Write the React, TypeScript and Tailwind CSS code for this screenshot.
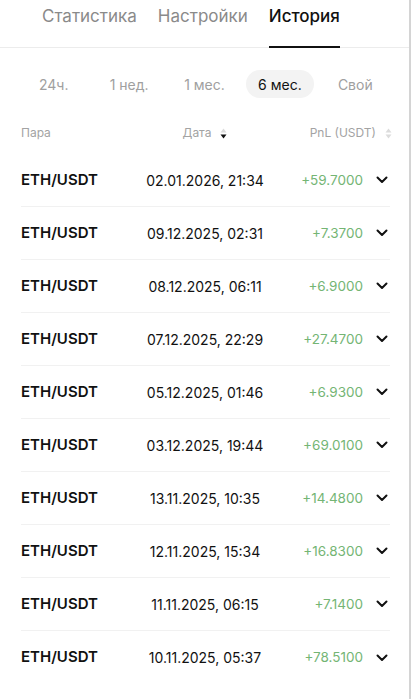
import React from "react";

const rows = [
  ["02.01.2026, 21:34", "+59.7000"],
  ["09.12.2025, 02:31", "+7.3700"],
  ["08.12.2025, 06:11", "+6.9000"],
  ["07.12.2025, 22:29", "+27.4700"],
  ["05.12.2025, 01:46", "+6.9300"],
  ["03.12.2025, 19:44", "+69.0100"],
  ["13.11.2025, 10:35", "+14.4800"],
  ["12.11.2025, 15:34", "+16.8300"],
  ["11.11.2025, 06:15", "+7.1400"],
  ["10.11.2025, 05:37", "+78.5100"],
];

function SortIcon({ active }: { active?: boolean }) {
  return (
    <svg width="7" height="11" viewBox="0 0 7 11" className="ml-[9px]">
      <path d="M3.5 0.5 L6.5 4.5 L0.5 4.5 Z" fill="#dcdcdc" />
      <path d="M3.5 10.5 L6.5 6.5 L0.5 6.5 Z" fill={active ? "#111111" : "#dcdcdc"} />
    </svg>
  );
}

function Chevron() {
  return (
    <svg width="12" height="8" viewBox="0 0 12 8">
      <path d="M1.5 1.5 L6 6 L10.5 1.5" fill="none" stroke="#111" strokeWidth="2" strokeLinecap="round" strokeLinejoin="round" />
    </svg>
  );
}

export default function App() {
  const font = { fontFamily: "Inter, 'Noto Sans', sans-serif" };
  return (
    <div className="w-[411px] min-h-[699px] bg-white border-r-2 border-[#d4d4d4] overflow-hidden" style={font}>
      <div className="h-[48px] border-b border-[#ececec] flex items-end pl-[42px] gap-[21px]">
        <div className="flex flex-col h-full">
          <div className="flex-1 flex items-start pt-[4px] text-[17px] text-[#8a8a8a]">Статистика</div>
          <div className="h-[2px]" />
        </div>
        <div className="flex flex-col h-full">
          <div className="flex-1 flex items-start pt-[4px] text-[17px] text-[#8a8a8a]">Настройки</div>
          <div className="h-[2px]" />
        </div>
        <div className="flex flex-col h-full">
          <div className="flex-1 flex items-start pt-[4px] text-[17px] text-[#111] font-medium">История</div>
          <div className="h-[2px] bg-[#111] mb-[-1px]" />
        </div>
      </div>

      <div className="grid grid-cols-5 px-[16px] pt-[22px] text-[14px] text-[#a0a0a0]">
        {["24ч.", "1 нед.", "1 мес.", "6 мес.", "Свой"].map((p) => (
          <div key={p} className="flex justify-center">
            {p === "6 мес." ? (
              <div className="h-[28px] px-[12px] rounded-full bg-[#f3f3f3] text-[#111] flex items-center">{p}</div>
            ) : (
              <div className="h-[28px] flex items-center">{p}</div>
            )}
          </div>
        ))}
      </div>

      <div className="pl-[21px] pr-[19px] mt-[14px]">
        <div className="grid grid-cols-[100px_168px_1fr] h-[42px] items-center text-[12px] text-[#a3a3a3]">
          <div>Пара</div>
          <div className="flex items-center justify-center">Дата<SortIcon active /></div>
          <div className="flex items-center justify-end mr-[-2px]">PnL (USDT)<SortIcon /></div>
        </div>
        {rows.map(([d, p], i) => (
          <div
            key={i}
            className={`grid grid-cols-[100px_168px_1fr_27px] h-[53px] items-center ${i < rows.length - 1 ? "border-b border-[#f1f1f1]" : ""}`}
          >
            <div className="text-[15px] font-semibold text-[#111]">ETH/USDT</div>
            <div className="text-[14px] text-[#111] text-center">{d}</div>
            <div className="text-[13.5px] text-[#74b574] text-right">{p}</div>
            <div className="flex justify-end pr-[2px]">
              <Chevron />
            </div>
          </div>
        ))}
      </div>
    </div>
  );
}
